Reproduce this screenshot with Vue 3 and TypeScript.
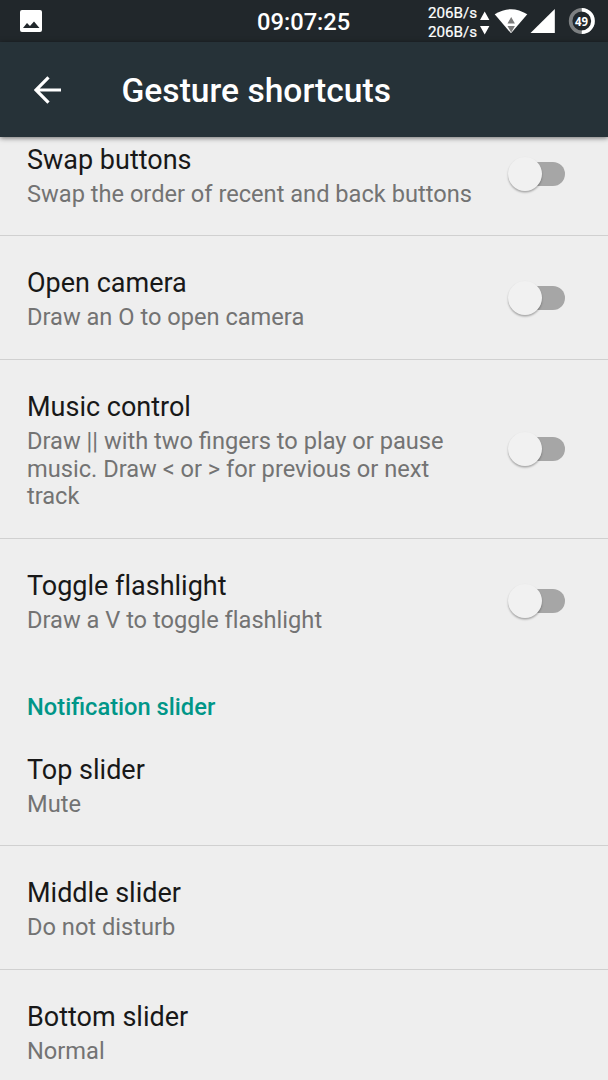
<script setup lang="ts">
interface Item { title: string; lines: string[] }
const gestures: Item[] = [
  { title: 'Swap buttons', lines: ['Swap the order of recent and back buttons'] },
  { title: 'Open camera', lines: ['Draw an O to open camera'] },
  { title: 'Music control', lines: ['Draw || with two fingers to play or pause', 'music. Draw < or > for previous or next', 'track'] },
  { title: 'Toggle f\u200Clashlight', lines: ['Draw a V to toggle f\u200Clashlight'] },
]
const sliders: Item[] = [
  { title: 'Top slider', lines: ['Mute'] },
  { title: 'Middle slider', lines: ['Do not disturb'] },
  { title: 'Bottom slider', lines: ['Normal'] },
]
</script>

<template>
  <div class="screen">
    <header class="status">
      <svg class="photo" width="22" height="22" viewBox="0 0 22 22"><path fill="#fff" fill-rule="evenodd" d="M2 0h18a2 2 0 0 1 2 2v18a2 2 0 0 1-2 2H2a2 2 0 0 1-2-2V2a2 2 0 0 1 2-2zM7 13l-4 5h16.500L14 11.500l-4 4.500z" /></svg>
      <span class="clock">09:07:25</span>
      <div class="net"><span>206B/s</span><span>206B/s</span></div>
      <svg class="icons" width="128" height="42" viewBox="0 0 128 42">
        <path fill="#fff" d="M0 20l4.700-8.500L9.400 20zM0 26h9.400l-4.700 8.500z" />
        <path fill="#fff" d="M14.700 14.300Q31 4 47.300 14.300L31 33.300z" />
        <path fill="#7b7b7b" d="M27.500 23.500l3.700-6.500 3.700 6.500zM27.500 26h7.400l-3.700 6.500z" />
        <path fill="#fff" d="M74.800 9v24H50.500z" />
        <circle cx="101.800" cy="21" r="11.200" fill="none" stroke="#7d8082" stroke-width="3.600" />
        <path d="M101.800 9.800a11.200 11.200 0 0 1 0 22.400" fill="none" stroke="#fff" stroke-width="3.600" />
        <text x="101.500" y="25.500" text-anchor="middle" fill="#fff" font-family="Open Sans, sans-serif" font-size="12.500" font-weight="700" textLength="13" lengthAdjust="spacingAndGlyphs">49</text>
      </svg>
    </header>
    <div class="bar">
      <svg class="back" width="27" height="28" viewBox="0 0 27 28"><path d="M27 14H2M14.500 1.300 1.900 14l12.600 12.700" fill="none" stroke="#fff" stroke-width="3.200" /></svg>
      <h1>Gesture shortcuts</h1>
    </div>
    <main>
      <section class="gestures">
        <div v-for="item in gestures" :key="item.title" class="row">
          <div class="copy">
            <div class="title">{{ item.title }}</div>
            <div v-for="line in item.lines" :key="line" class="line">{{ line }}</div>
          </div>
          <div class="switch"><i class="thumb"></i></div>
        </div>
      </section>
      <h2>Notification slider</h2>
      <section class="sliders">
        <div v-for="item in sliders" :key="item.title" class="row">
          <div class="copy">
            <div class="title">{{ item.title }}</div>
            <div v-for="line in item.lines" :key="line" class="line">{{ line }}</div>
          </div>
        </div>
      </section>
    </main>
  </div>
</template>

<style>
body { margin: 0; background: #eee; overflow: hidden; }
</style>
<style scoped>
.screen { width: 608px; height: 1080px; overflow: hidden; background: #eee; font-family: Roboto, sans-serif; display: flex; flex-direction: column; }
.status { height: 42px; flex: none; background: #21272b; display: flex; color: #fff; }
.photo { flex: none; margin: 10px 0 0 19.500px; }
.clock { flex: none; margin: 8px 0 0 215.500px; width: 95px; font-size: 23.700px; line-height: 28px; font-weight: 500; white-space: nowrap; }
.net { flex: none; margin: 4px 0 0 76px; width: 52px; font-size: 15.200px; line-height: 19px; display: flex; flex-direction: column; font-weight: 400; -webkit-text-stroke: .2px #fff; }
.icons { flex: none; }
.bar { height: 95px; flex: none; background: #263238; display: flex; color: #fff; box-shadow: 0 1px 5px rgba(0, 0, 0, .55); position: relative; }
.back { margin: 33.500px 0 0 34px; }
h1 { margin: 29px 0 0 60.500px; font-size: 33.600px; line-height: 40px; font-weight: 500; white-space: nowrap; }
.row { display: flex; justify-content: space-between; align-items: center; padding: 29.200px 43px 27px 27px; border-bottom: 1px solid #d0d0d0; }
.gestures .row:first-child { padding-top: 4.600px; padding-bottom: 27.100px; }
.row:last-child { border: 0; }
.title { font-size: 27px; line-height: 36px; margin-bottom: 3px; color: #181818; white-space: nowrap; }
.line { font-size: 23.630px; line-height: 27.500px; color: #737373; white-space: nowrap; }
.switch { width: 58px; height: 36px; margin-top: -1px; position: relative; display: flex; align-items: center; justify-content: flex-end; }
.switch::before { content: ''; width: 48px; height: 24px; border-radius: 12px; background: #a6a6a6; }
.thumb { position: absolute; left: 1px; top: 1px; width: 34px; height: 34px; border-radius: 50%; background: #f1f1f1; box-shadow: 0 1.500px 2px rgba(0, 0, 0, .3); }
h2 { margin: 31.500px 0 1.700px 27px; font-size: 23.700px; line-height: 28px; color: #009688; font-weight: 500; }
</style>
